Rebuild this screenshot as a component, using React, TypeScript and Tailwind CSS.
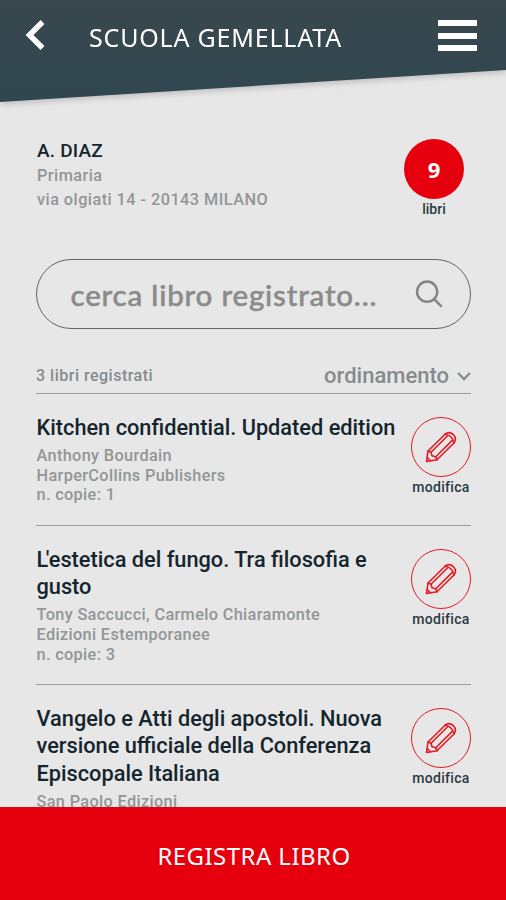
import { useState, type ReactNode } from "react"

type Book = {
    id: number
    title: ReactNode
    details: string[]
}

const books: Book[] = [
    {
        id: 1,
        title: "Kitchen confidential. Updated edition",
        details: ["Anthony Bourdain", "HarperCollins Publishers", "n. copie: 1"]
    },
    {
        id: 2,
        // the apostrophe sits tight against the L
        title: <><span className="tracking-[-2.5px]">L</span>'estetica del fungo. Tra filosofia e gusto</>,
        details: ["Tony Saccucci, Carmelo Chiaramonte", "Edizioni Estemporanee", "n. copie: 3"]
    },
    {
        id: 3,
        title: "Vangelo e Atti degli apostoli. Nuova versione ufficiale della Conferenza Episcopale Italiana",
        details: ["San Paolo Edizioni"]
    }
]

const PencilIcon = () => (
    <svg width="32" height="32" viewBox="0 0 32 32" fill="none" stroke="#e51a22" strokeWidth="1.6" strokeLinejoin="round" strokeLinecap="round">
        <path d="M1.5 30.5 L3 20 L20 3.2 Q24 -0.2 28.4 3.6 Q32.2 8 29 12 L12 28.8 Z" />
        <path d="M3 20 L6 21.2 L7 24.8 L10.8 25.8 L12 28.8" />
        <path d="M6 21.2 L22.4 5 M10.8 25.8 L27 9.6" />
        <path d="M20 3.2 Q27.4 4.2 29 12" />
        <path d="M2.2 26.5 L5.6 29.8" />
    </svg>
)

const BookRow = ({ book }: { book: Book }) => (
    <li className="flex justify-between border-b-[1.5px] border-[#9a9d9e] pt-[20px] pb-[20px]">
        <div className="w-[366px] pl-[0.5px]">
            <h2 className="text-[21.75px] leading-[27.2px] font-medium text-[#15252e]">{book.title}</h2>
            <div className="mt-[5px] text-[16.3px] leading-[19.6px] font-medium tracking-[0.35px] text-[#929696]">
                {book.details.map((line) => (
                    <p key={line}>{line}</p>
                ))}
            </div>
        </div>
        <button type="button" className="mt-[3px] flex w-[60px] shrink-0 flex-col items-center self-start">
            <span className="flex size-[60px] items-center justify-center rounded-full border-[1.5px] border-[#e51a22]">
                <PencilIcon />
            </span>
            <span className="text-[14px] leading-[21px] font-medium tracking-[0.3px] text-[#2b3a42]">modifica</span>
        </button>
    </li>
)

export default function App() {
    const [search, setSearch] = useState("")

    return (
        <div className="flex h-[900px] w-[506px] flex-col overflow-hidden bg-[#e7e7e7] font-['Roboto',sans-serif]">
            <div className="shrink-0 drop-shadow-[0_2px_3px_rgba(0,0,0,0.2)]">
                <header className="flex h-[103px] items-start bg-linear-to-b from-[#39474e] to-[#30474f] [clip-path:polygon(0_0,100%_0,100%_70px,0_102px)]">
                    <button type="button" className="mt-[19px] ml-[25px]">
                        <svg width="20" height="32" viewBox="0 0 20 32" fill="none" stroke="#fff" strokeWidth="5.5">
                            <path d="M17.5 3 L4.5 16 L17.5 29" />
                        </svg>
                    </button>
                    <h1 className="mt-[19px] ml-[44px] font-['Noto_Sans',sans-serif] text-[25px] leading-[36px] tracking-[0.8px] whitespace-nowrap text-white">
                        SCUOLA GEMELLATA
                    </h1>
                    <button type="button" className="mt-[20px] mr-[29.5px] ml-auto flex w-[39px] flex-col gap-[6.5px]">
                        <span className="h-[6px] w-full bg-white" />
                        <span className="h-[6px] w-full bg-white" />
                        <span className="h-[6px] w-full bg-white" />
                    </button>
                </header>
            </div>

            <main className="min-h-0 flex-1 overflow-hidden pr-[35px] pl-[36px]">
                <section className="flex justify-between pt-[36px]">
                    <div className="pl-px text-[16.3px] leading-[24px] font-medium tracking-[0.45px] text-[#929696]">
                        <p className="text-[19px] tracking-[0.2px] text-[#15252e]">A. DIAZ</p>
                        <p className="pt-px">Primaria</p>
                        <p>via olgiati 14 - 20143 MILANO</p>
                    </div>
                    <div className="mr-[7px] flex w-[60px] flex-col items-center">
                        <span className="flex size-[60px] items-center justify-center rounded-full bg-[#e6000e] font-['Noto_Sans',sans-serif] text-[22px] font-bold text-white">
                            9
                        </span>
                        <span className="text-[14px] leading-[21px] font-medium text-[#2b3a42]">libri</span>
                    </div>
                </section>

                <label className="mt-[39px] flex h-[70px] items-center rounded-full border-[1.5px] border-[#606567] pr-[27px] pl-[33.5px]">
                    <input
                        type="text"
                        value={search}
                        placeholder="cerca libro registrato..."
                        onChange={(e) => setSearch(e.target.value)}
                        className="mt-[3px] min-w-0 flex-1 bg-transparent font-['Lato',sans-serif] text-[29.5px] font-medium tracking-[0.8px] outline-none [-webkit-text-stroke:0.5px_#8b8b8b] placeholder:text-[#8b8b8b]"
                    />
                    <svg width="28" height="28" viewBox="0 0 30 30" fill="none" stroke="#858585" strokeWidth="2.6">
                        <circle cx="13" cy="12.5" r="10.8" />
                        <path d="M20 20 L28.5 28.5" />
                    </svg>
                </label>

                <div className="mt-[29px] flex h-[36px] items-center justify-between border-b-[1.5px] border-[#9a9d9e] font-medium text-[#858b8e]">
                    <p className="pt-px text-[16px] tracking-[0.5px]">3 libri registrati</p>
                    <button type="button" className="flex items-center gap-[8px] text-[22px]">
                        ordinamento
                        <svg width="14" height="10" viewBox="0 0 14 10" fill="none" stroke="#858b8e" strokeWidth="2.3">
                            <path d="M1 2 L7 8 L13 2" />
                        </svg>
                    </button>
                </div>

                <ul>
                    {books.map((book) => (
                        <BookRow key={book.id} book={book} />
                    ))}
                </ul>
            </main>

            <button
                type="button"
                className="flex h-[93px] w-full shrink-0 items-center justify-center bg-[#e6000e] pt-[4px] pl-[2px] font-['Noto_Sans',sans-serif] text-[24px] tracking-[0.45px] text-white"
            >
                REGISTRA LIBRO
            </button>
        </div>
    )
}
